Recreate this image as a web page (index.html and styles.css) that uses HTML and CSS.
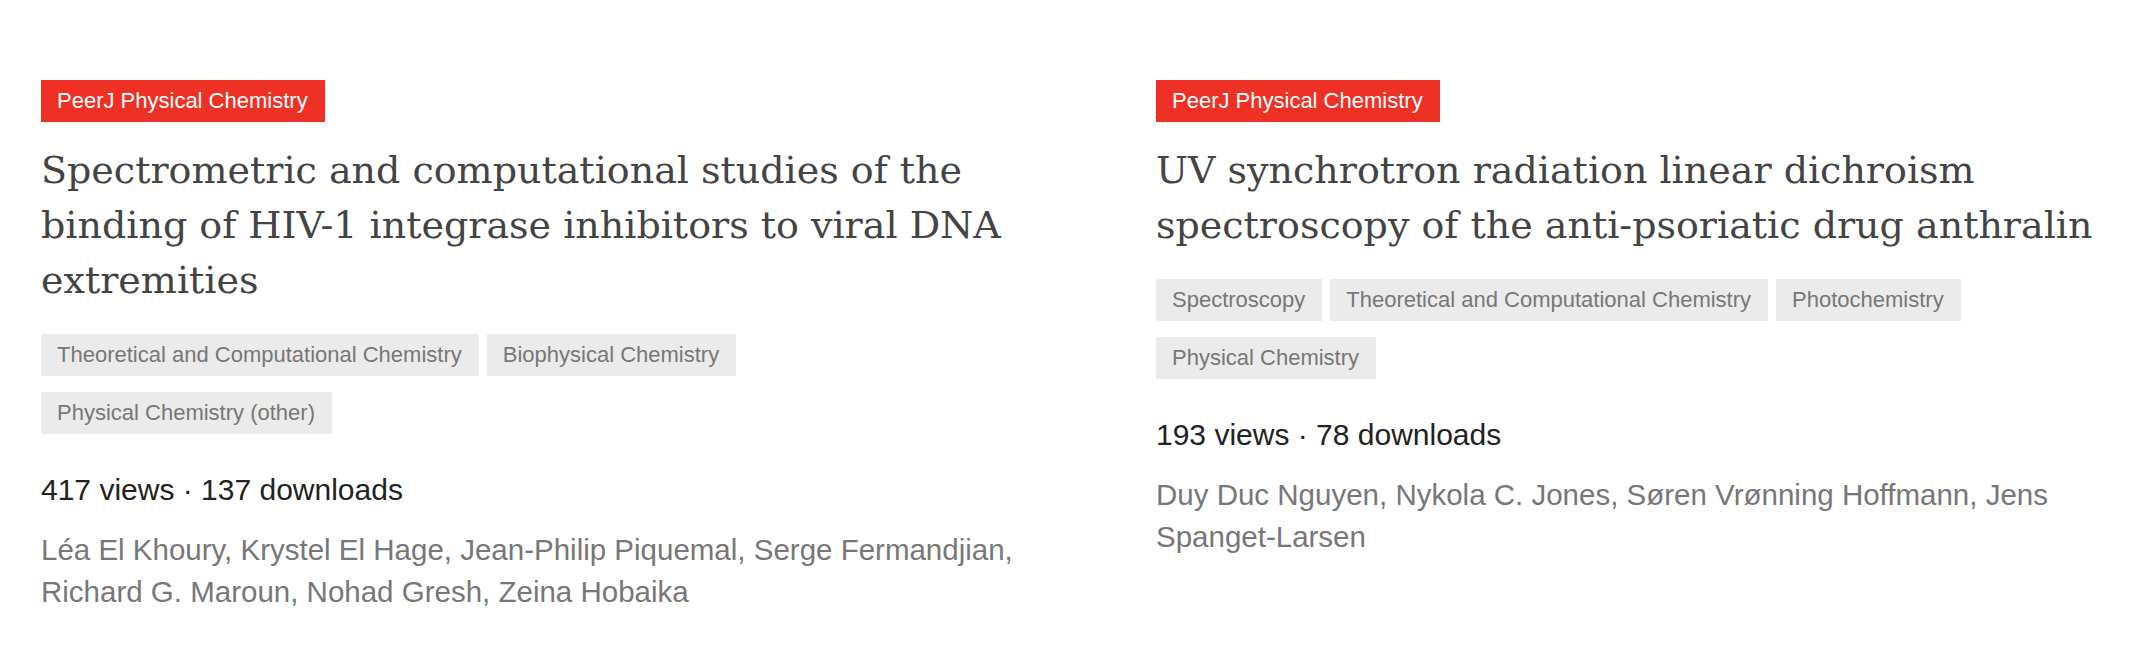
FILE: index.html
```html
<!DOCTYPE html>
<html lang="en">
<head>
    <meta charset="UTF-8">
    <meta name="viewport" content="width=device-width, initial-scale=1.0">
    <title>Articles</title>
    <link rel="stylesheet" href="styles.css">
</head>
<body>
    <div class="articles">
        <!-- Artigo 1 -->
        <div class="article">
            <span class="journal">PeerJ Physical Chemistry</span>
            <h2 class="title">Spectrometric and computational studies of the binding of HIV-1 integrase inhibitors to viral DNA extremities</h2>
            <div class="tags">
                <span class="tag">Theoretical and Computational Chemistry</span>
                <span class="tag">Biophysical Chemistry</span>
                <span class="tag">Physical Chemistry (other)</span>
            </div>
            <div class="stats">417 views · 137 downloads</div>
            <div class="authors">Léa El Khoury, Krystel El Hage, Jean-Philip Piquemal, Serge Fermandjian, Richard G. Maroun, Nohad Gresh, Zeina Hobaika</div>
        </div>

        <!-- Artigo 2 -->
        <div class="article">
            <span class="journal">PeerJ Physical Chemistry</span>
            <h2 class="title">UV synchrotron radiation linear dichroism spectroscopy of the anti-psoriatic drug anthralin</h2>
            <div class="tags">
                <span class="tag">Spectroscopy</span>
                <span class="tag">Theoretical and Computational Chemistry</span>
                <span class="tag">Photochemistry</span>
                <span class="tag">Physical Chemistry</span>
            </div>
            <div class="stats">193 views · 78 downloads</div>
            <div class="authors">Duy Duc Nguyen, Nykola C. Jones, Søren Vrønning Hoffmann, Jens Spanget-Larsen</div>
        </div>
    </div>
</body>
</html>
```

FILE: styles.css
```css
* {
    margin: 0;
    padding: 0;
    box-sizing: border-box;
    font-family: "Liberation Sans", Arial, sans-serif;
}
body {
    background: #fff;
}
.articles {
    display: grid;
    grid-template-columns: 985px 954px;
    column-gap: 130px;
    padding: 80px 40px 0 41px;
}
.article {
    display: flex;
    flex-direction: column;
    align-items: flex-start;
}
.journal {
    background: #ee3124;
    color: #fff;
    font-size: 22px;
    line-height: 26px;
    padding: 8px 17px 8px 16px;
}
.title {
    font-family: "DejaVu Serif", serif;
    font-weight: normal;
    font-size: 38px;
    line-height: 55px;
    color: #444;
    margin-top: 21px;
}
.tags {
    display: flex;
    flex-wrap: wrap;
    gap: 16px 8px;
    margin-top: 26px;
}
.tag {
    background: #ebebeb;
    color: #777;
    font-size: 22px;
    line-height: 26px;
    padding: 8px 17px 8px 16px;
}
.stats {
    font-size: 30px;
    line-height: 40px;
    color: #222;
    margin-top: 36px;
}
.authors {
    font-size: 29.5px;
    line-height: 42px;
    color: #777;
    margin-top: 19px;
}
```
